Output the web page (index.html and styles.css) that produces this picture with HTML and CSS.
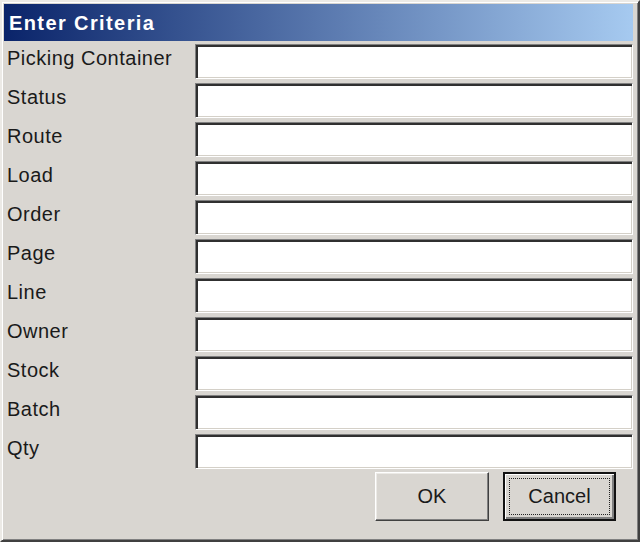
FILE: index.html
```html
<!DOCTYPE html>
<html lang="en">
<head>
  <meta charset="UTF-8" />
  <title>Enter Criteria</title>
  <link rel="stylesheet" href="styles.css">
</head>
<body>

  <div class="window">
    <!-- Title Bar -->
    <div class="title-bar">Enter Criteria</div>

    <!-- Criteria Fields -->
    <div class="criteria">
      <label class="field-label">Picking Container</label><div class="field"></div>
      <label class="field-label">Status</label><div class="field"></div>
      <label class="field-label">Route</label><div class="field"></div>
      <label class="field-label">Load</label><div class="field"></div>
      <label class="field-label">Order</label><div class="field"></div>
      <label class="field-label">Page</label><div class="field"></div>
      <label class="field-label">Line</label><div class="field"></div>
      <label class="field-label">Owner</label><div class="field"></div>
      <label class="field-label">Stock</label><div class="field"></div>
      <label class="field-label">Batch</label><div class="field"></div>
      <label class="field-label">Qty</label><div class="field"></div>
    </div>

    <!-- Buttons -->
    <div class="buttons">
      <button class="btn">OK</button>
      <button class="btn btn-default"><span class="focus">Cancel</span></button>
    </div>
  </div>

</body>
</html>
```

FILE: styles.css
```css
/* Basic Reset */
* {
  margin: 0;
  padding: 0;
  box-sizing: border-box;
}

body {
  font-family: "Liberation Sans", Arial, sans-serif;
  background: #d9d6d1;
}

/* Window frame */
.window {
  width: 640px;
  height: 542px;
  background: #d9d6d1;
  border: 2px solid;
  border-color: #eceae6 #404040 #404040 #eceae6;
  box-shadow: inset 1px 1px #ffffff, inset -1px -1px #808080;
  padding: 2px 5px 2px 2px;
}

/* Title Bar */
.title-bar {
  height: 37px;
  padding: 2px 0 0 5px;
  line-height: 35px;
  font-size: 20px;
  font-weight: bold;
  letter-spacing: 1.4px;
  color: #fff;
  background: linear-gradient(to right, #0a246a, #a6caf0);
}

/* Criteria grid */
.criteria {
  display: grid;
  grid-template-columns: 191px 1fr;
  grid-auto-rows: 35px;
  row-gap: 4px;
  margin-top: 3px;
}

.field-label {
  padding: 2px 0 0 3px;
  font-size: 20px;
  line-height: 24px;
  letter-spacing: 0.5px;
  color: #1a1a1a;
}

.field {
  background: #fff;
  border: 1px solid;
  border-color: #808080 #ffffff #ffffff #808080;
  box-shadow: inset 2px 2px #303030, inset -1px -1px #d4d0c8;
}

/* Buttons */
.buttons {
  display: flex;
  justify-content: flex-end;
  gap: 14px;
  margin-top: 3px;
  padding-right: 17px;
}

.btn {
  width: 114px;
  height: 49px;
  font-family: "Liberation Sans", Arial, sans-serif;
  font-size: 20px;
  color: #1a1a1a;
  background: #d9d6d1;
  border: 1px solid;
  border-color: #ffffff #404040 #404040 #ffffff;
  box-shadow: inset -1px -1px #808080, inset 1px 1px #eceae6;
}

.btn-default {
  width: 113px;
  border: 2px solid #111;
  box-shadow: inset 1px 1px #ffffff, inset -2px -2px #808080;
  padding: 4px;
}

.btn-default .focus {
  display: flex;
  align-items: center;
  justify-content: center;
  height: 100%;
  border: 1px dotted #222;
}
```
